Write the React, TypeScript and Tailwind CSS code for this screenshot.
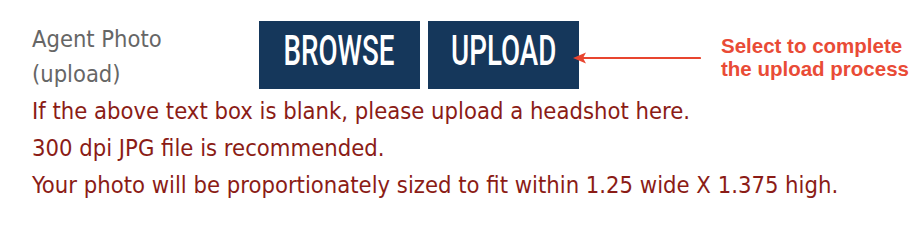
import React from "react";

// Photo upload row with annotation callout
export default function App() {
  return (
    <div className="min-h-[208px] w-[921px] bg-white pl-8 pt-[21px]">
      <div className="flex items-start">
        <div className="w-[227px] pt-[1px] text-[23.5px] leading-[35px] text-[#666666] font-['DejaVu_Sans_Condensed','DejaVu_Sans',sans-serif] font-stretch-condensed">
          Agent Photo
          <br />
          (upload)
        </div>

        <div className="flex gap-2">
          <button className="flex h-[68px] w-[161px] items-center justify-center bg-[#15375b] pb-2 text-white">
            <span className="inline-block scale-x-[0.66] font-['Roboto',sans-serif] text-[42px] font-medium leading-none">
              BROWSE
            </span>
          </button>
          <button className="flex h-[68px] w-[151px] items-center justify-center bg-[#15375b] pb-2 text-white">
            <span className="inline-block scale-x-[0.66] font-['Roboto',sans-serif] text-[42px] font-medium leading-none">
              UPLOAD
            </span>
          </button>
        </div>

        <svg
          className="relative -ml-[6px] mt-[30px] shrink-0"
          width="128"
          height="14"
          viewBox="0 0 128 14"
        >
          <line x1="8" y1="7" x2="127" y2="7" stroke="#e8452f" strokeWidth="2.2" strokeLinecap="round" />
          <path d="M0 7 L13 1.5 L10 7 L13 12.5 Z" fill="#e8452f" />
        </svg>

        <div className="ml-5 mt-[13px] font-['Liberation_Sans',Arial,sans-serif] text-[20.5px] font-bold leading-[23px] text-[#e94b36]">
          Select to complete
          <br />
          the upload process
        </div>
      </div>

      <div className="mt-[1px] text-[23.6px] leading-[37px] text-[#8b1c16] font-['DejaVu_Sans_Condensed','DejaVu_Sans',sans-serif] font-stretch-condensed">
        <p>If the above text box is blank, please upload a headshot here.</p>
        <p>300 dpi JPG file is recommended.</p>
        <p>Your photo will be proportionately sized to fit within 1.25 wide X 1.375 high.</p>
      </div>
    </div>
  );
}
